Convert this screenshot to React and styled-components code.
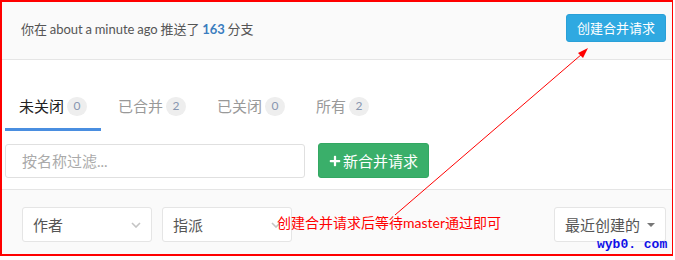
import styled, { createGlobalStyle } from 'styled-components';
import { FaPlus } from 'react-icons/fa';

const GlobalStyle = createGlobalStyle`
  html, body {
    margin: 0;
    background: #fff;
  }
  body {
    font-family: Lato, "Noto Sans CJK SC", sans-serif;
  }
`;

const Frame = styled.div`
  position: relative;
  box-sizing: border-box;
  width: 673px;
  height: 256px;
  border: 2px solid #f00;
  border-right-width: 1px;
  display: flex;
  flex-direction: column;
  overflow: hidden;
`;

const Header = styled.div`
  box-sizing: border-box;
  height: 58px;
  padding: 0 6px 6px 19px;
  background: #fafafa;
  border-bottom: 1px solid #e5e5e5;
  display: flex;
  align-items: center;
  justify-content: space-between;
`;

const Pushed = styled.div`
  font-size: 13px;
  color: #555;
  word-spacing: -0.6px;
  margin-top: 2px;
`;

const Count = styled.strong`
  color: #3a7dbf;
  font-weight: 700;
`;

const TopButton = styled.button`
  height: 28px;
  padding: 0 10px;
  border: 1px solid #2aa0d8;
  border-radius: 3px;
  background: #2fa9e1;
  color: #fff;
  font-family: inherit;
  font-size: 13px;
`;

const TabList = styled.div`
  display: flex;
  gap: 3px;
  padding-left: 3px;
  height: 71px;
  align-items: flex-end;
`;

const Tab = styled.div`
  display: flex;
  align-items: center;
  gap: 3px;
  padding: 0 14px 12px;
  border-bottom: 3px solid ${(p) => (p.active ? '#4a8ee0' : 'transparent')};
  font-size: 15px;
  line-height: 20px;
  color: ${(p) => (p.active ? '#222' : '#999')};
`;

const Badge = styled.span`
  display: inline-flex;
  align-items: center;
  justify-content: center;
  width: 20px;
  height: 19px;
  border-radius: 10px;
  background: #eee;
  color: #8796b0;
  font-size: 12px;
`;

const FilterRow = styled.div`
  display: flex;
  align-items: center;
  gap: 13px;
  padding: 12px 3px 11px;
  border-bottom: 1px solid #e5e5e5;
`;

const SearchInput = styled.input`
  box-sizing: border-box;
  width: 300px;
  height: 34px;
  padding: 0 16px;
  border: 1px solid #e0e0e0;
  border-radius: 3px;
  font-family: inherit;
  font-size: 15px;
  color: #555;
  outline: none;
  &::placeholder {
    color: #aaa;
  }
`;

const GreenButton = styled.button`
  box-sizing: border-box;
  height: 35px;
  padding: 0 10px;
  display: inline-flex;
  align-items: center;
  gap: 2px;
  border: 1px solid #33a862;
  border-radius: 3px;
  background: #3aaf6a;
  color: #fff;
  font-family: inherit;
  font-size: 15px;
`;

const FilterBar = styled.div`
  flex: 1;
  display: flex;
  align-items: flex-start;
  gap: 10px;
  padding: 17px 6px 0 20px;
  background: #fafafa;
`;

const Dropdown = styled.div`
  box-sizing: border-box;
  width: ${(p) => p.width}px;
  height: 35px;
  padding: 0 10px;
  display: flex;
  align-items: center;
  justify-content: space-between;
  background: #fff;
  border: 1px solid #e5e5e5;
  border-radius: 3px;
  font-size: 15px;
  color: #555;
`;

const Spacer = styled.div`
  margin-left: auto;
`;

const Caret = styled.span`
  width: 0;
  height: 0;
  border-left: 4px solid transparent;
  border-right: 4px solid transparent;
  border-top: 4px solid #777;
`;

const Annotation = styled.div`
  position: absolute;
  left: 275px;
  top: 211px;
  font-size: 14px;
  line-height: 20px;
  color: #f00;
  white-space: nowrap;
`;

const Overlay = styled.svg`
  position: absolute;
  left: -2px;
  top: -2px;
  pointer-events: none;
`;

const Watermark = styled.div`
  position: absolute;
  left: 595px;
  top: 235px;
  font-family: "Liberation Mono", monospace;
  font-weight: 700;
  font-size: 13px;
  color: #1010e8;
  white-space: nowrap;
`;

function Chevron() {
  return (
    <svg width="10" height="6" viewBox="0 0 10 6">
      <path d="M1 1 L5 5 L9 1" fill="none" stroke="#c4c4c4" strokeWidth="1.6" />
    </svg>
  );
}

const tabs = [
  { label: '未关闭', count: 0, active: true },
  { label: '已合并', count: 2 },
  { label: '已关闭', count: 0 },
  { label: '所有', count: 2 },
];

export default function App() {
  return (
    <>
      <GlobalStyle />
      <Frame>
        <Header>
          <Pushed>
            你在 about a minute ago 推送了 <Count>163</Count> 分支
          </Pushed>
          <TopButton type="button">创建合并请求</TopButton>
        </Header>

        <TabList>
          {tabs.map((t) => (
            <Tab key={t.label} active={t.active}>
              {t.label}
              <Badge>{t.count}</Badge>
            </Tab>
          ))}
        </TabList>

        <FilterRow>
          <SearchInput placeholder="按名称过滤..." />
          <GreenButton type="button">
            <FaPlus size={12} />
            新合并请求
          </GreenButton>
        </FilterRow>

        <FilterBar>
          <Dropdown width={130}>
            作者
            <Chevron />
          </Dropdown>
          <Dropdown width={130}>
            指派
            <Chevron />
          </Dropdown>
          <Spacer />
          <Dropdown width={112}>
            最近创建的
            <Caret />
          </Dropdown>
        </FilterBar>

        <Annotation>创建合并请求后等待master通过即可</Annotation>

        <Overlay width="675" height="260">
          <line x1="395" y1="215" x2="582" y2="54" stroke="#f00" strokeWidth="1" />
          <polygon points="588,48 578,53 583,58" fill="#f00" />
        </Overlay>

        <Watermark>wyb0. com</Watermark>
      </Frame>
    </>
  );
}
